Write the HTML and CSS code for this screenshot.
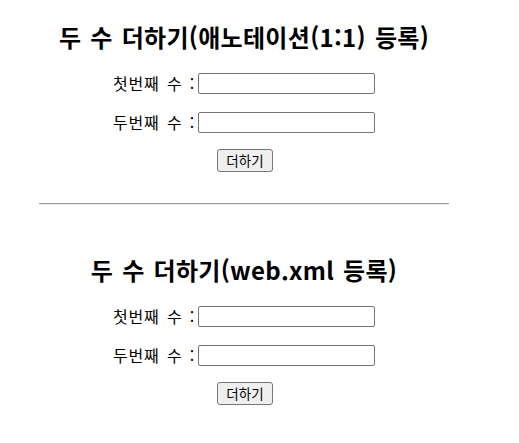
FILE: index.html
```html
<!DOCTYPE html>
<html lang="ko">
<head>
<meta charset="utf-8">
<title>두 수 더하기</title>
<link rel="stylesheet" href="styles.css">
</head>
<body>
<div class="page">
  <section class="block block-first">
    <h2 class="title">두 수 더하기(애노테이션(1:1) 등록)</h2>
    <form class="form">
      <div class="row"><label class="label">첫번째 수 :</label><input class="field" type="text"></div>
      <div class="row"><label class="label">두번째 수 :</label><input class="field" type="text"></div>
      <div class="row row-btn"><button class="btn" type="button">더하기</button></div>
    </form>
  </section>
  <hr class="divider">
  <section class="block block-second">
    <h2 class="title">두 수 더하기(web.xml 등록)</h2>
    <form class="form">
      <div class="row"><label class="label">첫번째 수 :</label><input class="field" type="text"></div>
      <div class="row"><label class="label">두번째 수 :</label><input class="field" type="text"></div>
      <div class="row row-btn"><button class="btn" type="button">더하기</button></div>
    </form>
  </section>
</div>
</body>
</html>
```
FILE: styles.css
```css
html, body {
  margin: 0;
  padding: 0;
  background: #ffffff;
}
body {
  font-family: "Noto Sans CJK KR", "Noto Sans", sans-serif;
  color: #000;
}
.page {
  width: 472px;
  margin-left: 8px;
  display: flex;
  flex-direction: column;
  align-items: center;
}
.block {
  display: flex;
  flex-direction: column;
  align-items: center;
  width: 100%;
}
.block-first {
  padding-top: 21px;
}
.block-second {
  padding-top: 49px;
}
.title {
  margin: 0;
  font-size: 24px;
  font-weight: bold;
  line-height: 32px;
  height: 32px;
  white-space: nowrap;
  letter-spacing: 0.3px;
  word-spacing: 2px;
}
.form {
  margin: 20px 0 0 0;
  display: flex;
  flex-direction: column;
  align-items: center;
  gap: 18px;
}
.row {
  display: flex;
  align-items: center;
  height: 21px;
}
.row-btn {
  height: 23px;
  margin-top: -2px;
}
.label {
  font-size: 16px;
  line-height: 21px;
  margin-right: 3px;
  white-space: nowrap;
  letter-spacing: 0.8px;
  word-spacing: 2px;
}
.field {
  box-sizing: border-box;
  width: 177px;
  height: 21px;
  margin: 0;
  border: 1px solid #767676;
  border-radius: 2px;
  padding: 1px 2px;
  background: #fff;
}
.btn {
  box-sizing: border-box;
  width: 56px;
  height: 23px;
  margin: 0 0 0 2px;
  padding: 0 6px;
  border: 1px solid #767676;
  border-radius: 3px;
  background: #efefef;
  font-family: "Noto Sans CJK KR", sans-serif;
  font-size: 13.5px;
  line-height: 21px;
  color: #000;
}
.divider {
  box-sizing: border-box;
  width: 410px;
  height: 2px;
  margin: 31px 0 0 0;
  border: 0;
  border-top: 1px solid #9a9a9a;
  border-bottom: 1px solid #eeeeee;
}
```
